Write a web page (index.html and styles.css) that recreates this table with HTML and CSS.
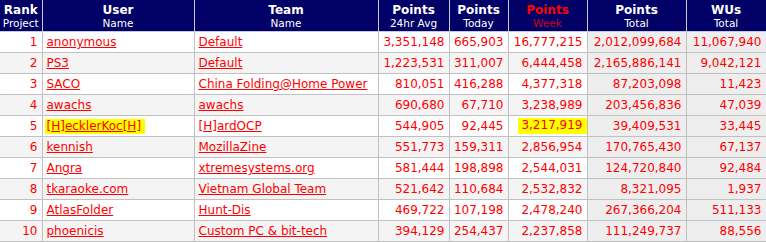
FILE: index.html
```html
<!DOCTYPE html>
<html>
<head>
<meta charset="utf-8">
<link rel="stylesheet" href="styles.css">
</head>
<body>
<table class="stats">
  <colgroup>
    <col class="c-rank"><col class="c-user"><col class="c-team"><col class="c-avg"><col class="c-today"><col class="c-week"><col class="c-total"><col class="c-wus">
  </colgroup>
  <thead>
    <tr>
      <th><span class="h1">Rank</span><span class="h2">Project</span></th>
      <th><span class="h1">User</span><span class="h2">Name</span></th>
      <th><span class="h1">Team</span><span class="h2">Name</span></th>
      <th><span class="h1">Points</span><span class="h2">24hr Avg</span></th>
      <th><span class="h1">Points</span><span class="h2">Today</span></th>
      <th class="sorted"><span class="h1">Points</span><span class="h2">Week</span></th>
      <th><span class="h1">Points</span><span class="h2">Total</span></th>
      <th><span class="h1">WUs</span><span class="h2">Total</span></th>
    </tr>
  </thead>
  <tbody>
    <tr><td class="num">1</td><td><a href="#">anonymous</a></td><td><a href="#">Default</a></td><td class="num">3,351,148</td><td class="num">665,903</td><td class="num">16,777,215</td><td class="num tot">2,012,099,684</td><td class="num tot">11,067,940</td></tr>
    <tr><td class="num">2</td><td><a href="#">PS3</a></td><td><a href="#">Default</a></td><td class="num">1,223,531</td><td class="num">311,007</td><td class="num">6,444,458</td><td class="num tot">2,165,886,141</td><td class="num tot">9,042,121</td></tr>
    <tr><td class="num">3</td><td><a href="#">SACO</a></td><td><a href="#">China Folding@Home Power</a></td><td class="num">810,051</td><td class="num">416,288</td><td class="num">4,377,318</td><td class="num tot">87,203,098</td><td class="num tot">11,423</td></tr>
    <tr><td class="num">4</td><td><a href="#">awachs</a></td><td><a href="#">awachs</a></td><td class="num">690,680</td><td class="num">67,710</td><td class="num">3,238,989</td><td class="num tot">203,456,836</td><td class="num tot">47,039</td></tr>
    <tr><td class="num">5</td><td><a href="#" class="hl">[H]ecklerKoc[H]</a></td><td><a href="#">[H]ardOCP</a></td><td class="num">544,905</td><td class="num">92,445</td><td class="num hlcell"><span class="hlnum">3,217,919</span></td><td class="num tot">39,409,531</td><td class="num tot">33,445</td></tr>
    <tr><td class="num">6</td><td><a href="#">kennish</a></td><td><a href="#">MozillaZine</a></td><td class="num">551,773</td><td class="num">159,311</td><td class="num">2,856,954</td><td class="num tot">170,765,430</td><td class="num tot">67,137</td></tr>
    <tr><td class="num">7</td><td><a href="#">Angra</a></td><td><a href="#">xtremesystems.org</a></td><td class="num">581,444</td><td class="num">198,898</td><td class="num">2,544,031</td><td class="num tot">124,720,840</td><td class="num tot">92,484</td></tr>
    <tr><td class="num">8</td><td><a href="#">tkaraoke.com</a></td><td><a href="#">Vietnam Global Team</a></td><td class="num">521,642</td><td class="num">110,684</td><td class="num">2,532,832</td><td class="num tot">8,321,095</td><td class="num tot">1,937</td></tr>
    <tr><td class="num">9</td><td><a href="#">AtlasFolder</a></td><td><a href="#">Hunt-Dis</a></td><td class="num">469,722</td><td class="num">107,198</td><td class="num">2,478,240</td><td class="num tot">267,366,204</td><td class="num tot">511,133</td></tr>
    <tr><td class="num">10</td><td><a href="#">phoenicis</a></td><td><a href="#">Custom PC &amp; bit-tech</a></td><td class="num">394,129</td><td class="num">254,437</td><td class="num">2,237,858</td><td class="num tot">111,249,737</td><td class="num tot">88,556</td></tr>
  </tbody>
</table>
</body>
</html>
```
FILE: styles.css
```css
html, body {
  margin: 0;
  padding: 0;
  background: #ffffff;
}
.stats {
  width: 766px;
  table-layout: fixed;
  border-collapse: collapse;
  font-family: "DejaVu Sans", Verdana, sans-serif;
  font-size: 12px;
  color: #ff0000;
}
.c-rank { width: 42px; }
.c-user { width: 152px; }
.c-team { width: 184px; }
.c-avg { width: 71px; }
.c-today { width: 59px; }
.c-week { width: 79px; }
.c-total { width: 99px; }
.c-wus { width: 80px; }

.stats th {
  background: #000066;
  color: #ffffff;
  height: 31px;
  padding: 0;
  border: 1px solid #c8c8d8;
  border-top: none;
  text-align: center;
  vertical-align: middle;
  line-height: 1;
}
.stats th:first-child { border-left: none; }
.stats th .h1 {
  display: block;
  font-weight: bold;
  font-size: 12px;
  line-height: 14px;
}
.stats th .h2 {
  display: block;
  font-weight: normal;
  font-size: 10.5px;
  line-height: 12px;
}
.stats th.sorted .h1 { color: #ff0000; }
.stats th.sorted .h2 { color: #cc0022; }

.stats td {
  height: 20px;
  padding: 0 4px 0 4px;
  border: 1px solid #c0c0c0;
  white-space: nowrap;
  overflow: hidden;
  vertical-align: middle;
  line-height: 14px;
}
.stats td:first-child { border-left: none; }
.stats tbody tr:nth-child(even) td { background: #f4f4f4; }
.stats tbody td.tot,
.stats tbody tr:nth-child(even) td.tot { background: #eeeeee; }
.stats td.num { text-align: right; }
.stats a { color: #ff0000; text-decoration: underline; }
.stats a.hl {
  background: #ffff00;
  padding: 0 4px 1px 2px;
  margin-left: -2px;
}
.stats td.hlcell { padding-right: 0; }
.hlnum {
  background: #ffff00;
  padding: 0 4px 1px 3px;
  display: inline-block;
  line-height: 15px;
}
```
